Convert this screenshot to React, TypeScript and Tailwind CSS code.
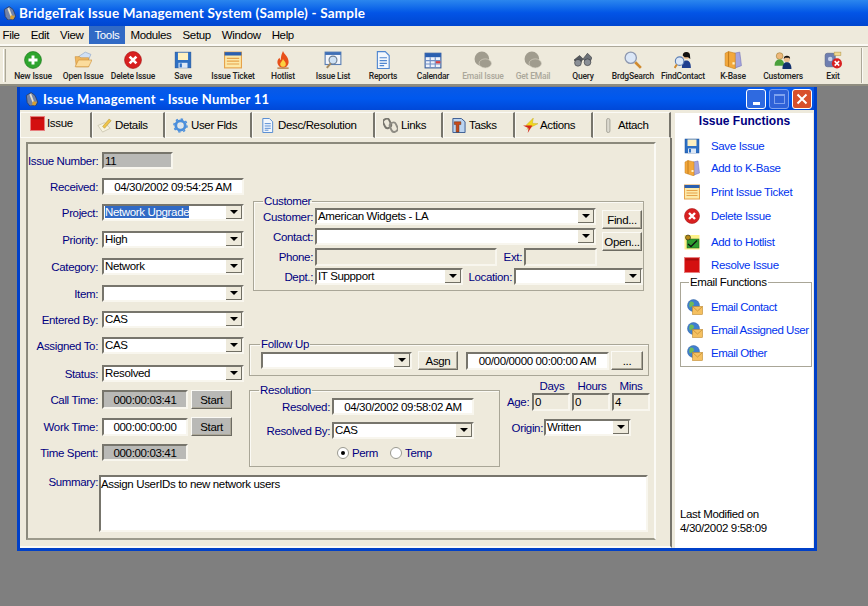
import type { ReactNode } from "react";

// Small toolbar / panel icons, all on a 16x16 grid
const Icon = ({ name, size = 16 }: { name: string; size?: number }) => {
  let body: ReactNode = null;
  switch (name) {
    case "plus":
      body = (
        <>
          <circle cx="8" cy="8" r="7.5" fill="#2ea52e" stroke="#1c7a1c" strokeWidth="0.6" />
          <path d="M8 4v8M4 8h8" stroke="#fff" strokeWidth="2.6" />
        </>
      );
      break;
    case "open":
      body = (
        <>
          <path d="M4 5l6-4 5 2-3 7z" fill="#cfe0f5" stroke="#7f9cc4" strokeWidth="0.5" />
          <path d="M1 5h4l1 1h7v8H2z" fill="#f0b860" stroke="#c98a2e" strokeWidth="0.5" />
          <path d="M1 14l3-6h12l-3 6z" fill="#fbdc9c" stroke="#c98a2e" strokeWidth="0.5" />
        </>
      );
      break;
    case "del":
      body = (
        <>
          <circle cx="8" cy="8" r="7.5" fill="#d82020" stroke="#a81818" strokeWidth="0.6" />
          <path d="M5 5l6 6M11 5l-6 6" stroke="#fff" strokeWidth="2.4" />
        </>
      );
      break;
    case "save":
      body = (
        <>
          <rect x="1" y="1" width="14" height="14" fill="#2c6fc4" stroke="#1e4f96" strokeWidth="0.5" />
          <rect x="3.5" y="1.5" width="9" height="6.5" fill="#fdf0c0" />
          <rect x="4" y="10.5" width="8" height="4.5" fill="#dbe7f5" />
          <rect x="5" y="11" width="2" height="3.5" fill="#2c6fc4" />
        </>
      );
      break;
    case "ticket":
      body = (
        <>
          <rect x="0.5" y="1" width="15" height="14" fill="#fce9a9" stroke="#e6a24a" />
          <rect x="0.5" y="1" width="15" height="3" fill="#2a5fb0" />
          <path d="M2.5 6.5h11M2.5 9h11M2.5 11.5h11" stroke="#e6a24a" />
        </>
      );
      break;
    case "fire":
      body = (
        <>
          <path d="M8 0c1 3 5 5 5 10a5 5 0 0 1-10 0c0-2 1-3 2-4 0 1 .5 2 1 2 0-3 1-6 2-8z" fill="#e8501a" />
          <path d="M8 7c.6 1.5 2.5 2.5 2.5 4.5a2.5 2.5 0 0 1-5 0C5.5 10 7.5 9 8 7z" fill="#fcd040" />
          <rect x="3" y="14.5" width="10" height="1.5" fill="#c09060" />
        </>
      );
      break;
    case "list":
      body = (
        <>
          <rect x="1" y="1" width="14" height="11" fill="#f4f6fa" stroke="#5b7fb5" />
          <rect x="1" y="1" width="14" height="2.5" fill="#3f6fb5" />
          <circle cx="8" cy="8" r="3.5" fill="#cfe2f5" stroke="#6d7f94" />
          <path d="M6 11l-3.5 4" stroke="#a58a5e" strokeWidth="1.8" />
        </>
      );
      break;
    case "doc":
      body = (
        <>
          <path d="M3 .5h7l3.5 3.5v11.5H3z" fill="#f2f7fd" stroke="#4f86d0" />
          <path d="M5 6h6.5M5 8.5h6.5M5 11h6.5M5 13h4" stroke="#4f86d0" />
        </>
      );
      break;
    case "cal":
      body = (
        <>
          <rect x="1" y="2" width="14" height="13" fill="#eef2fa" stroke="#3a5f9e" />
          <rect x="1" y="2" width="14" height="3.5" fill="#2a5fb0" />
          <path d="M1 8.5h14M1 11.5h14M5.5 5.5v9.5M10 5.5v9.5" stroke="#6f8fc5" />
          <rect x="10.5" y="9" width="4" height="2" fill="#d84040" />
        </>
      );
      break;
    case "blob":
      body = (
        <>
          <circle cx="7" cy="7" r="6.5" fill="#a09c8e" />
          <ellipse cx="10" cy="11" rx="5.5" ry="4" fill="#a09c8e" stroke="#d6d2c4" strokeWidth="0.6" />
        </>
      );
      break;
    case "query":
      body = (
        <>
          <path d="M0 8l5-4 3 3-3 5z" fill="#55595f" stroke="#2e3034" strokeWidth="0.5" />
          <path d="M8 7l4-5 4 4-3 6z" fill="#6d7278" stroke="#2e3034" strokeWidth="0.5" />
          <circle cx="3.5" cy="10.5" r="3" fill="#8a8f96" stroke="#2e3034" strokeWidth="0.5" />
          <circle cx="12" cy="10" r="3" fill="#8a8f96" stroke="#2e3034" strokeWidth="0.5" />
        </>
      );
      break;
    case "search":
      body = (
        <>
          <circle cx="6" cy="6" r="5" fill="#dbe7f7" stroke="#8d98b0" strokeWidth="1.2" />
          <path d="M10 10l5 5" stroke="#d08a2e" strokeWidth="2.4" />
        </>
      );
      break;
    case "contact":
      body = (
        <>
          <circle cx="11" cy="4" r="3.2" fill="#f0c090" />
          <path d="M7.8 4a3.2 3.2 0 0 1 6.4 0l.3 3-2-1.5h-3z" fill="#111" />
          <path d="M7 15c0-5 2-6.5 4-6.5s4 1.5 4 6.5z" fill="#1f3f8f" />
          <circle cx="5" cy="9" r="3.8" fill="#dbe7f7" stroke="#5c7fb5" />
          <path d="M2.5 12l-2 3" stroke="#d08a2e" strokeWidth="1.8" />
        </>
      );
      break;
    case "books":
      body = (
        <>
          <path d="M9 2l5-1 1.5 12-5.5 2z" fill="#a6a6de" stroke="#6b6bb5" strokeWidth="0.5" />
          <path d="M1 2l3-1.5 6 1.5v14l-6-2-3-1z" fill="#f3a83c" stroke="#c47e1e" strokeWidth="0.5" />
          <path d="M4 .5V14" stroke="#c47e1e" />
          <rect x="7.5" y="10" width="2" height="2" fill="#fff3c8" />
        </>
      );
      break;
    case "customers":
      body = (
        <>
          <circle cx="5" cy="4.5" r="3" fill="#eeb87a" stroke="#9a7a2a" strokeWidth="0.5" />
          <path d="M.5 13c0-4 2-5.5 4.5-5.5S9 9 9 13z" fill="#4aa03c" />
          <circle cx="11.5" cy="7" r="2.8" fill="#f0c090" />
          <path d="M8.7 7a2.8 2.8 0 0 1 5.6 0l-1-1h-3.5z" fill="#111" />
          <path d="M7.5 16c0-4.5 1.8-6 4-6s4 1.5 4 6z" fill="#12306e" />
        </>
      );
      break;
    case "exit":
      body = (
        <>
          <rect x="1" y="2" width="9" height="12" rx="2" fill="#6f7fb0" stroke="#49557f" strokeWidth="0.5" />
          <circle cx="5.5" cy="7" r="2" fill="#c8d2ea" />
          <rect x="9" y="1" width="6" height="3" fill="#f0d890" stroke="#b59a50" strokeWidth="0.5" />
          <circle cx="11.5" cy="11" r="4.5" fill="#d82020" />
          <path d="M9.5 9l4 4M13.5 9l-4 4" stroke="#fff" strokeWidth="1.4" />
        </>
      );
      break;
    case "issue":
      body = (
        <>
          <rect x="0.5" y="0.5" width="15" height="15" fill="#d41010" stroke="#e88080" />
          <rect x="1.5" y="1.5" width="13" height="2" fill="#a80c0c" />
        </>
      );
      break;
    case "details":
      body = (
        <>
          <path d="M1 8l7-3 6 6-8 4z" fill="#f7f3df" stroke="#b8b39c" strokeWidth="0.6" />
          <path d="M6 9l7-8 2 2-7 8z" fill="#f0c44a" stroke="#a88a20" strokeWidth="0.5" />
        </>
      );
      break;
    case "gear":
      body = (
        <>
          <circle cx="8" cy="8" r="5" fill="none" stroke="#4b8fdc" strokeWidth="3" />
          <circle cx="8" cy="8" r="7" fill="none" stroke="#4b8fdc" strokeWidth="1.6" strokeDasharray="2.5 3" />
          <circle cx="8" cy="8" r="2.5" fill="#d6e6f8" />
        </>
      );
      break;
    case "links":
      body = (
        <>
          <rect x="1" y="1" width="7" height="10" rx="3" fill="none" stroke="#77756d" strokeWidth="2" transform="rotate(-25 4 6)" />
          <rect x="8" y="5" width="7" height="10" rx="3" fill="none" stroke="#8e8c84" strokeWidth="2" transform="rotate(-25 11 10)" />
        </>
      );
      break;
    case "tasks":
      body = (
        <>
          <path d="M2 .5h9l4 3.5v11.5H2z" fill="#bcd4f0" stroke="#35588f" />
          <path d="M3.5 4h7v3h-2v8h-3V7h-2z" fill="#c84a1a" stroke="#5a2a10" strokeWidth="0.5" />
        </>
      );
      break;
    case "actions":
      body = (
        <>
          <path d="M11 0L3 8l5 .5L4 12l12-6-6-.5z" fill="#f2d81e" stroke="#b8a010" strokeWidth="0.4" />
          <path d="M0 8h10l-5 8 1-5z" fill="#d42a1a" />
        </>
      );
      break;
    case "attach":
      body = <rect x="6" y="0.5" width="3.5" height="15" rx="1.7" fill="#dcdad0" stroke="#a6a49a" />;
      break;
    case "hotlist":
      body = (
        <>
          <rect x="0.5" y="1" width="15" height="14.5" fill="#fdf28a" />
          <rect x="3" y="5" width="12" height="9" fill="#2e9e30" stroke="#1c5e1c" strokeWidth="0.5" />
          <circle cx="4" cy="3.5" r="2.5" fill="#b88a14" stroke="#222" strokeWidth="0.6" />
          <path d="M4 10l3 2.5 6-6" fill="none" stroke="#111" strokeWidth="1.3" />
        </>
      );
      break;
    case "email":
      body = (
        <>
          <circle cx="6.5" cy="6.5" r="6" fill="#3f7fd0" stroke="#2f5f9f" strokeWidth="0.5" />
          <path d="M3 3c2-1 4 0 4 2s-3 2-4 4c-1-2-1-4 0-6z" fill="#6dbb5a" />
          <rect x="5.5" y="7.5" width="10" height="8" fill="#f5c060" stroke="#c08a30" strokeWidth="0.6" />
          <path d="M5.5 7.5l5 4.5 5-4.5" fill="none" stroke="#c08a30" strokeWidth="0.7" />
        </>
      );
      break;
    case "app":
      body = (
        <>
          <path d="M1.5 4L7 .5 11.5 4l3 7.500-2 4-7 .5-3-4z" fill="#7283a8" stroke="#2c3550" strokeWidth="0.8" />
          <path d="M6 2.500l3.500 9" stroke="#e8e4d0" strokeWidth="2" />
          <path d="M9 10.500l4.500 1L11.500 15.500 8 14.500z" fill="#d8a030" />
        </>
      );
      break;
  }
  return (
    <svg width={size} height={size} viewBox="0 0 16 16" className="shrink-0">
      {body}
    </svg>
  );
};

const tools = [
  { label: "New Issue", icon: "plus" },
  { label: "Open Issue", icon: "open" },
  { label: "Delete Issue", icon: "del" },
  { label: "Save", icon: "save" },
  { label: "Issue Ticket", icon: "ticket" },
  { label: "Hotlist", icon: "fire" },
  { label: "Issue List", icon: "list" },
  { label: "Reports", icon: "doc" },
  { label: "Calendar", icon: "cal" },
  { label: "Email Issue", icon: "blob", off: true },
  { label: "Get EMail", icon: "blob", off: true },
  { label: "Query", icon: "query" },
  { label: "BrdgSearch", icon: "search" },
  { label: "FindContact", icon: "contact" },
  { label: "K-Base", icon: "books" },
  { label: "Customers", icon: "customers" },
  { label: "Exit", icon: "exit" },
];

const tabs = [
  { label: "Issue", icon: "issue", w: "w-[72px] pl-[9px] gap-[2px] pb-[4px]" },
  { label: "Details", icon: "details", w: "w-[73px] pl-[4px] gap-[3px]" },
  { label: "User Flds", icon: "gear", w: "w-[87px] pl-[7px] gap-[3px]" },
  { label: "Desc/Resolution", icon: "doc", w: "w-[123px] pl-[7px] gap-[3px]" },
  { label: "Links", icon: "links", w: "w-[68px] pl-[7px] gap-[3px]" },
  { label: "Tasks", icon: "tasks", w: "w-[72px] pl-[7px] gap-[3px]" },
  { label: "Actions", icon: "actions", w: "w-[78px] pl-[7px] gap-[2px]" },
  { label: "Attach", icon: "attach", w: "w-[78px] pl-[7px] gap-[2px]" },
];

const sunken = "border-2 border-t-[#77756c] border-l-[#77756c] border-b-[#f8f6ee] border-r-[#f8f6ee]";

const Combo = ({ value, w, hl }: { value?: string; w: string; hl?: boolean }) => (
  <div className={`${w} h-[17px] bg-white ${sunken} flex items-center shrink-0`}>
    <div className="flex-1 min-w-0 pl-[1px] text-black whitespace-nowrap leading-[13px]">
      {hl ? <span className="bg-[#316ac5] text-white">{value}</span> : value}
    </div>
    <div className="w-[16px] h-[13px] bg-[#eeeadc] border-r border-b border-[#716f64] flex items-center justify-center">
      <div className="w-0 h-0 border-l-[4px] border-r-[4px] border-t-[4px] border-l-transparent border-r-transparent border-t-black" />
    </div>
  </div>
);

const Field = ({ value, w, gray, center = true, h = "h-[17px]" }: { value?: string; w: string; gray?: boolean; center?: boolean; h?: string }) => (
  <div
    className={`${w} ${h} ${gray ? "bg-[#b9b9b6]" : "bg-white"} ${sunken} flex items-center shrink-0 text-black whitespace-nowrap ${center ? "justify-center" : "pl-[1px]"}`}
  >
    {value}
  </div>
);

// Disabled edit box: same beige as the dialog
const Blank = ({ w, value, h = "h-[18px]" }: { w: string; value?: string; h?: string }) => (
  <div className={`${w} ${h} ${sunken} flex items-center pl-[1px] shrink-0 text-black`}>{value}</div>
);

const Btn = ({ label, w, h = "h-[19px]", gray }: { label: string; w: string; h?: string; gray?: boolean }) => (
  <div
    className={`${w} ${h} ${gray ? "bg-[#b9b9b6]" : "bg-[#eeeadc]"} border border-t-[#fbfaf5] border-l-[#fbfaf5] border-b-[#6d6b62] border-r-[#6d6b62] shadow-[inset_-1px_-1px_0_#aca899] flex items-center justify-center text-black shrink-0`}
  >
    {label}
  </div>
);

const Label = ({ children, w }: { children: ReactNode; w: string }) => (
  <div className={`${w} text-right text-[#000080] whitespace-nowrap shrink-0`}>{children}</div>
);

const Row = ({ label, mt, children }: { label: string; mt: string; children: ReactNode }) => (
  <div className={`flex items-center gap-[3px] ${mt}`}>
    <div className="w-[71px] pr-[1px] shrink-0">
      <Label w="w-full">{label}</Label>
    </div>
    {children}
  </div>
);

const Action = ({ icon, label, mt }: { icon: string; label: string; mt: string }) => (
  <div className={`flex items-center h-[16px] ${mt}`}>
    <div className="w-[31px] pl-[4px]">
      <Icon name={icon} size={16} />
    </div>
    <span className="text-[#0033ee] whitespace-nowrap">{label}</span>
  </div>
);

const MailAction = ({ label, mt }: { label: string; mt: string }) => (
  <div className={`flex items-center h-[16px] ${mt}`}>
    <div className="w-[30px] pl-[6px]">
      <Icon name="email" size={16} />
    </div>
    <span className="text-[#0033ee] whitespace-nowrap tracking-[-0.45px]">{label}</span>
  </div>
);

const Radio = ({ label, on }: { label: string; on?: boolean }) => (
  <div className="flex items-center gap-[3px]">
    <div className="w-[12px] h-[12px] rounded-full bg-white border border-[#9a9a90] flex items-center justify-center">
      {on && <div className="w-[4px] h-[4px] rounded-full bg-black" />}
    </div>
    <span className="text-[#000080]">{label}</span>
  </div>
);

const groupBox = "border border-[#a9a697] shadow-[inset_1px_1px_0_#fbfaf5]";

export default function App() {
  return (
    <div
      className="w-[868px] h-[606px] bg-[#7f7f7f] flex flex-col overflow-hidden text-[11.5px] leading-[14px] tracking-[-0.35px]"
      style={{ fontFamily: '"Liberation Sans", Arial, sans-serif' }}
    >
      {/* Main title bar */}
      <div className="h-[26px] shrink-0 bg-gradient-to-b from-[#2b86ee] via-[#0354e6] to-[#0046d0] flex items-center pl-[3px] gap-[2px]">
        <Icon name="app" size={14} />
        <span className="text-white text-[13.5px] font-bold tracking-[0.2px] whitespace-nowrap" style={{ fontFamily: "Lato, sans-serif" }}>
          BridgeTrak Issue Management System (Sample) - Sample
        </span>
      </div>

      {/* Menu */}
      <div className="h-[20px] shrink-0 bg-[#eeeadc] border-b-2 border-b-[#fbfaf5] flex items-stretch text-black -ml-[3px]">
        {["File", "Edit", "View", "Tools", "Modules", "Setup", "Window", "Help"].map((m) => (
          <div
            key={m}
            className={`px-[5.5px] flex items-center ${m === "Tools" ? "bg-[#316ac5] text-white" : ""}`}
          >
            {m}
          </div>
        ))}
      </div>

      {/* Toolbar */}
      <div className="h-[40px] shrink-0 bg-[#eeeadc] border-t border-t-[#aca899] border-b-2 border-b-[#8f8d80] flex items-stretch">
        <div className="w-[3px] ml-[3px] my-[2px] mr-[2px] bg-[#dcd9c8] border-l border-[#fff] border-r border-r-[#aca899]" />
        {tools.map((t) => (
          <div key={t.label} className="w-[50px] flex flex-col items-center pt-[4px] shrink-0">
            <Icon name={t.icon} size={18} />
            <span
              className={`mt-[1px] text-[8.5px] leading-[12px] tracking-[-0.2px] whitespace-nowrap font-medium ${t.off ? "text-[#aaa79a]" : "text-[#222]"}`}
              style={{ fontFamily: "Roboto, sans-serif" }}
            >
              {t.label}
            </span>
          </div>
        ))}
        <div className="ml-[3px] my-[1px] w-[2px] bg-[#fbfaf5] border-l border-[#aca899]" />
      </div>

      {/* Desktop with the child window */}
      <div className="flex-1 pl-[17px] pt-[1px]">
        <div className="w-[800px] h-[464px] bg-[#0046d5] border-[3px] border-[#0040c8] border-t-0 flex flex-col">
          <div className="h-[23px] shrink-0 bg-gradient-to-b from-[#0a5ae6] via-[#0058ee] to-[#0048d8] flex items-center pl-[5px] gap-[4px]">
            <Icon name="app" size={14} />
            <span className="text-white text-[13px] font-bold tracking-[0.25px] whitespace-nowrap" style={{ fontFamily: "Lato, sans-serif" }}>
              Issue Management - Issue Number 11
            </span>
            <div className="ml-auto flex gap-[3px] pr-[2px]">
              <div className="w-[20px] h-[20px] rounded-[3px] border border-white bg-[#2f6ae0] flex items-end justify-center pb-[3px]">
                <div className="w-[7px] h-[3px] bg-white" />
              </div>
              <div className="w-[20px] h-[20px] rounded-[3px] border border-[#7fa2ee] bg-[#2f62d8] flex items-center justify-center">
                <div className="w-[11px] h-[10px] border border-[#7fa2ee] border-t-2" />
              </div>
              <div className="w-[20px] h-[20px] rounded-[3px] border border-white bg-[#d8502c] flex items-center justify-center">
                <svg width="12" height="12" viewBox="0 0 12 12">
                  <path d="M1.5 1.5l9 9M10.5 1.5l-9 9" stroke="#fff" strokeWidth="2" />
                </svg>
              </div>
            </div>
          </div>

          <div className="flex-1 flex min-h-0 bg-[#eeeadc]">
            {/* Dialog with tabs */}
            <div className="w-[652px] shrink-0 flex flex-col text-black">
              <div className="flex h-[28px] pt-[2px] items-stretch shrink-0">
                {tabs.map((t) => (
                  <div
                    key={t.label}
                    className={`${t.w} shrink-0 flex items-center border-r-2 border-r-[#77756c] border-l border-l-[#fbfaf5] border-t border-t-[#fbfaf5] border-b border-b-[#fbfaf5]`}
                  >
                    <Icon name={t.icon} size={15} />
                    <span>{t.label}</span>
                  </div>
                ))}
              </div>

              <div className="flex-1 flex flex-col border-r-2 border-r-[#77756c] border-b-2 border-b-[#fbfaf5] px-[6px] pt-[4px] pb-[4px] min-h-0">
                <div className="w-[630px] h-[398px] border-2 border-[#8b897c] border-b-[#9c9a8c] border-r-[#fbfaf5] shrink-0 flex flex-col">
                  <div className="flex items-start">
                    {/* Left column of fields */}
                    <div className="w-[220px] shrink-0 flex flex-col">
                      <Row label="Issue Number:" mt="mt-[8px]">
                        <Field w="w-[71px]" value="11" gray center={false} />
                      </Row>
                      <Row label="Received:" mt="mt-[9px]">
                        <Field w="w-[142px]" value="04/30/2002 09:54:25 AM" />
                      </Row>
                      <Row label="Project:" mt="mt-[9px]">
                        <Combo w="w-[142px]" value="Network Upgrade" hl />
                      </Row>
                      <Row label="Priority:" mt="mt-[10px]">
                        <Combo w="w-[142px]" value="High" />
                      </Row>
                      <Row label="Category:" mt="mt-[10px]">
                        <Combo w="w-[142px]" value="Network" />
                      </Row>
                      <Row label="Item:" mt="mt-[10px]">
                        <Combo w="w-[142px]" />
                      </Row>
                      <Row label="Entered By:" mt="mt-[9px]">
                        <Combo w="w-[142px]" value="CAS" />
                      </Row>
                      <Row label="Assigned To:" mt="mt-[9px]">
                        <Combo w="w-[142px]" value="CAS" />
                      </Row>
                      <Row label="Status:" mt="mt-[11px]">
                        <Combo w="w-[142px]" value="Resolved" />
                      </Row>
                      <Row label="Call Time:" mt="mt-[8px]">
                        <Field w="w-[86px]" h="h-[19px]" value="000:00:03:41" gray />
                        <Btn label="Start" w="w-[41px]" gray />
                      </Row>
                      <Row label="Work Time:" mt="mt-[8px]">
                        <Field w="w-[86px]" h="h-[18px]" value="000:00:00:00" />
                        <Btn label="Start" w="w-[41px]" gray />
                      </Row>
                      <Row label="Time Spent:" mt="mt-[8px]">
                        <Field w="w-[86px]" value="000:00:03:41" gray />
                      </Row>
                    </div>

                    {/* Right side of the form */}
                    <div className="flex-1 flex flex-col pl-[1px] min-w-0">
                      <fieldset className={`${groupBox} w-[391px] h-[97px] ml-[4px] mt-[50px] pb-[3px]`}>
                        <legend className="ml-[9px] px-[1px] text-[#000080] leading-[14px]">Customer</legend>
                        <div className="flex">
                          <div className="flex flex-col w-[342px] shrink-0">
                            <div className="flex items-center gap-[2px]">
                              <Label w="w-[59px]">Customer:</Label>
                              <Combo w="w-[281px]" value="American Widgets - LA" />
                            </div>
                            <div className="flex items-center gap-[2px] mt-[3px]">
                              <Label w="w-[59px]">Contact:</Label>
                              <Combo w="w-[281px]" />
                            </div>
                            <div className="flex items-center gap-[2px] mt-[3px]">
                              <Label w="w-[59px]">Phone:</Label>
                              <Blank w="w-[182px]" />
                              <Label w="w-[23px]">Ext:</Label>
                              <Blank w="w-[73px]" />
                            </div>
                            <div className="flex items-center gap-[2px] mt-[2px] w-[389px]">
                              <Label w="w-[59px]">Dept.:</Label>
                              <Combo w="w-[148px]" value="IT Suppport" />
                              <Label w="w-[47px]">Location:</Label>
                              <Combo w="w-[129px]" />
                            </div>
                          </div>
                          <div className="flex flex-col gap-[3px] ml-[6px] mt-[2px]">
                            <Btn label="Find..." w="w-[40px]" />
                            <Btn label="Open..." w="w-[40px]" />
                          </div>
                        </div>
                      </fieldset>

                      <fieldset className={`${groupBox} w-[400px] h-[39px] mt-[46px]`}>
                        <legend className="ml-[10px] px-[1px] text-[#000080] leading-[14px]">Follow Up</legend>
                        <div className="flex items-center pl-[11px]">
                          <Combo w="w-[151px]" />
                          <div className="w-[6px]" />
                          <Btn label="Asgn" w="w-[40px]" />
                          <div className="w-[8px]" />
                          <Field w="w-[143px]" h="h-[18px]" value="00/00/0000 00:00:00 AM" />
                          <div className="w-[2px]" />
                          <Btn label="..." w="w-[32px]" />
                        </div>
                      </fieldset>

                      <div className="flex mt-[7px]">
                        <fieldset className={`${groupBox} w-[251px] h-[84px] shrink-0`}>
                          <legend className="ml-[9px] px-[1px] text-[#000080] leading-[14px]">Resolution</legend>
                          <div className="flex items-center gap-[2px] mt-[1px]">
                            <Label w="w-[80px]">Resolved:</Label>
                            <Field w="w-[142px]" value="04/30/2002 09:58:02 AM" />
                          </div>
                          <div className="flex items-center gap-[2px] mt-[7px]">
                            <Label w="w-[80px]">Resolved By:</Label>
                            <Combo w="w-[142px]" value="CAS" />
                          </div>
                          <div className="flex gap-[12px] mt-[7px] pl-[87px]">
                            <Radio label="Perm" on />
                            <Radio label="Temp" />
                          </div>
                        </fieldset>

                        <div className="flex flex-col ml-[7px]">
                          <div className="flex pl-[25px] text-[#000080] mt-[-4px] text-center">
                            <div className="w-[40px]">Days</div>
                            <div className="w-[40px]">Hours</div>
                            <div className="w-[38px]">Mins</div>
                          </div>
                          <div className="flex items-center">
                            <Label w="w-[22px]">Age:</Label>
                            <div className="w-[3px]" />
                            <div className="flex gap-[2px]">
                              <Blank w="w-[38px]" value="0" />
                              <Blank w="w-[38px]" value="0" />
                              <Blank w="w-[38px]" value="4" />
                            </div>
                          </div>
                          <div className="flex items-center gap-[1px] mt-[8px] pl-[3px]">
                            <Label w="w-[33px]">Origin:</Label>
                            <Combo w="w-[87px]" value="Written" />
                          </div>
                        </div>
                      </div>
                    </div>
                  </div>

                  {/* Summary */}
                  <div className="flex items-start mt-[8px] gap-[1px]">
                    <Label w="w-[70px]">Summary:</Label>
                    <div className={`w-[549px] h-[57px] bg-white ${sunken} text-black`}>
                      Assign UserIDs to new network users
                    </div>
                  </div>
                </div>
              </div>
            </div>

            {/* Functions panel */}
            <div className="w-[141px] shrink-0 pl-[3px] pt-[3px] flex flex-col">
              <div className="flex-1 bg-white flex flex-col pl-[5px] pr-[4px] pt-[1px] pb-[13px] min-h-0">
                <div className="text-center text-[#000080] font-bold text-[12px] tracking-[0px]">Issue Functions</div>
                <Action icon="save" label="Save Issue" mt="mt-[10px]" />
                <Action icon="books" label="Add to K-Base" mt="mt-[6px]" />
                <Action icon="ticket" label="Print Issue Ticket" mt="mt-[8px]" />
                <Action icon="del" label="Delete Issue" mt="mt-[8px]" />
                <Action icon="hotlist" label="Add to Hotlist" mt="mt-[10px]" />
                <Action icon="issue" label="Resolve Issue" mt="mt-[7px]" />
                <fieldset className="border border-[#a9a697] w-[132px] h-[92px] mt-[2px] shrink-0">
                  <legend className="ml-[8px] px-[1px] text-black leading-[14px]">Email Functions</legend>
                  <MailAction label="Email Contact" mt="mt-[10px]" />
                  <MailAction label="Email Assigned User" mt="mt-[7px]" />
                  <MailAction label="Email Other" mt="mt-[7px]" />
                </fieldset>
                <div className="mt-auto text-black whitespace-nowrap">
                  Last Modified on
                  <br />
                  4/30/2002 9:58:09
                </div>
              </div>
            </div>
          </div>
        </div>
      </div>
    </div>
  );
}
